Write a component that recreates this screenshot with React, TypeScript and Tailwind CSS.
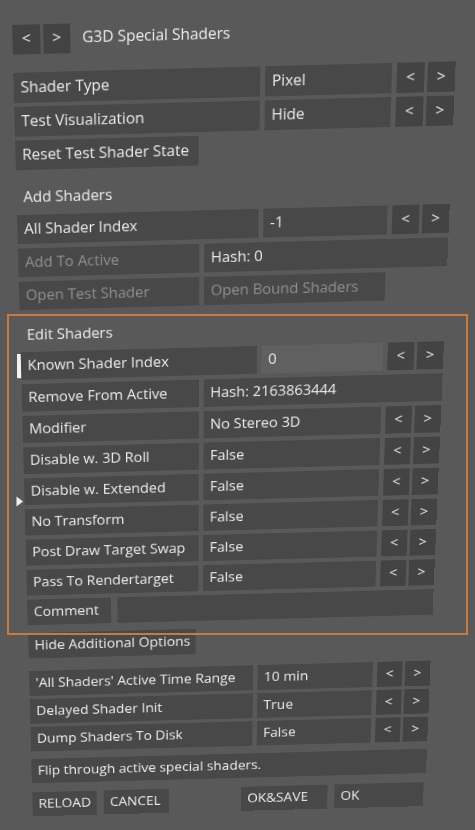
import React from 'react';

type CellProps = {
  children?: React.ReactNode;
  className?: string;
  muted?: boolean;
};

const Cell = ({ children, className = '', muted }: CellProps) => (
  <div
    className={`flex h-[32px] items-center whitespace-nowrap bg-[#484848] px-[7px] ${
      muted ? 'text-[#8f8f8f]' : 'text-[#ececec]'
    } ${className}`}
  >
    {children}
  </div>
);

const Arrows = () => (
  <div className="ml-[5px] flex shrink-0 gap-[3px]">
    <div className="flex h-[32px] w-[28px] items-center justify-center bg-[#434343] text-[#ececec]">&lt;</div>
    <div className="flex h-[32px] w-[28px] items-center justify-center bg-[#434343] text-[#ececec]">&gt;</div>
  </div>
);

// wide label column (top, add and time range rows)
const WideRow = ({ label, value }: { label: string; value: string }) => (
  <div className="flex w-[446px]">
    <Cell className="w-[249px]">{label}</Cell>
    <Cell className="ml-[5px] w-[128px]">{value}</Cell>
    <Arrows />
  </div>
);

// narrow label column (edit shader rows)
const EditRow = ({ label, value }: { label: string; value: string }) => (
  <div className="flex w-[446px]">
    <Cell className="w-[188px]">{label}</Cell>
    <Cell className="ml-[5px] flex-1">{value}</Cell>
    <Arrows />
  </div>
);

const Heading = ({ children }: { children: React.ReactNode }) => (
  <div className="flex h-[30px] items-center px-[7px] text-[#ececec]">{children}</div>
);

const editRows: [string, string][] = [
  ['Modifier', 'No Stereo 3D'],
  ['Disable w. 3D Roll', 'False'],
  ['Disable w. Extended', 'False'],
  ['No Transform', 'False'],
  ['Post Draw Target Swap', 'False'],
  ['Pass To Rendertarget', 'False'],
];

export default function App() {
  return (
    <div className="relative h-[830px] w-[475px] overflow-hidden bg-[#595959] pl-[12px] pt-[23px] font-['Open_Sans','Noto_Sans',sans-serif] text-[15.5px] leading-none">
      <div className="w-[446px] origin-top-left [transform:perspective(1753px)_rotateZ(-1.5deg)_rotateX(-15deg)]">
        {/* header */}
        <div className="flex h-[34px] items-center">
          <div className="flex h-[31px] w-[28px] items-center justify-center bg-[#434343] text-[#ececec]">&lt;</div>
          <div className="ml-[3px] flex h-[31px] w-[27px] items-center justify-center bg-[#434343] text-[#ececec]">&gt;</div>
          <div className="ml-[12px] text-[15.5px] text-[#ececec]">G3D Special Shaders</div>
        </div>

        <div className="mt-[18px] flex flex-col gap-[4px]">
          <WideRow label="Shader Type" value="Pixel" />
          <WideRow label="Test Visualization" value="Hide" />
          <Cell className="w-[187px]">Reset Test Shader State</Cell>
        </div>

        {/* add shaders */}
        <div className="mt-[15px]">
          <Heading>Add Shaders</Heading>
        </div>
        <div className="mt-[4px] flex flex-col gap-[5px]">
          <WideRow label="All Shader Index" value="-1" />
          <div className="flex w-[446px]">
            <Cell className="w-[188px]" muted>
              Add To Active
            </Cell>
            <Cell className="ml-[5px] flex-1">Hash: 0</Cell>
          </div>
          <div className="flex w-[446px]">
            <Cell className="w-[188px]" muted>
              Open Test Shader
            </Cell>
            <Cell className="ml-[5px] w-[189px]" muted>
              Open Bound Shaders
            </Cell>
          </div>
        </div>

        {/* edit shaders */}
        <div className="mt-[14px]">
          <Heading>Edit Shaders</Heading>
        </div>
        <div className="mt-[4px] flex flex-col gap-[5px]">
          <div className="-ml-[4px] flex w-[450px]">
            <div className="my-[2px] w-[4px] bg-[#f2f2f2]" />
            <Cell className="w-[249px]">Known Shader Index</Cell>
            <Cell className="ml-[5px] w-[128px] bg-[#606060]">0</Cell>
            <Arrows />
          </div>
          <div className="flex w-[446px]">
            <Cell className="w-[188px]">Remove From Active</Cell>
            <Cell className="ml-[5px] flex-1">Hash: 2163863444</Cell>
          </div>
          {editRows.map(([label, value]) => (
            <EditRow key={label} label={label} value={value} />
          ))}
          <div className="flex w-[446px]">
            <Cell className="w-[92px]">Comment</Cell>
            <Cell className="ml-[7px] flex-1" />
          </div>
        </div>

        {/* additional options */}
        <div className="mt-[10px]">
          <Cell className="w-[185px]">Hide Additional Options</Cell>
        </div>
        <div className="mt-[16px] flex flex-col gap-[4px]">
          <WideRow label="'All Shaders' Active Time Range" value="10 min" />
          <WideRow label="Delayed Shader Init" value="True" />
          <WideRow label="Dump Shaders To Disk" value="False" />
        </div>

        <div className="mt-[10px]">
          <Cell className="w-[446px]">Flip through active special shaders.</Cell>
        </div>

        <div className="mt-[12px] flex w-[446px]">
          <Cell className="w-[73px] px-[6px]">RELOAD</Cell>
          <Cell className="ml-[8px] w-[74px] px-[6px]">CANCEL</Cell>
          <Cell className="ml-[82px] w-[98px] px-[6px]">OK&amp;SAVE</Cell>
          <Cell className="ml-[8px] w-[101px] px-[6px]">OK</Cell>
        </div>
      </div>

      {/* selection highlight drawn over the panel */}
      <div className="absolute left-[7px] top-[314px] h-[321px] w-[461px] border-2 border-[#c97b3e]" />

      {/* pointer */}
      <svg className="absolute left-[16px] top-[496px]" width="8" height="11" viewBox="0 0 8 11">
        <path d="M0.5 0.5 L7 5.5 L0.5 10.5 Z" fill="#f0f0f0" />
      </svg>
    </div>
  );
}
